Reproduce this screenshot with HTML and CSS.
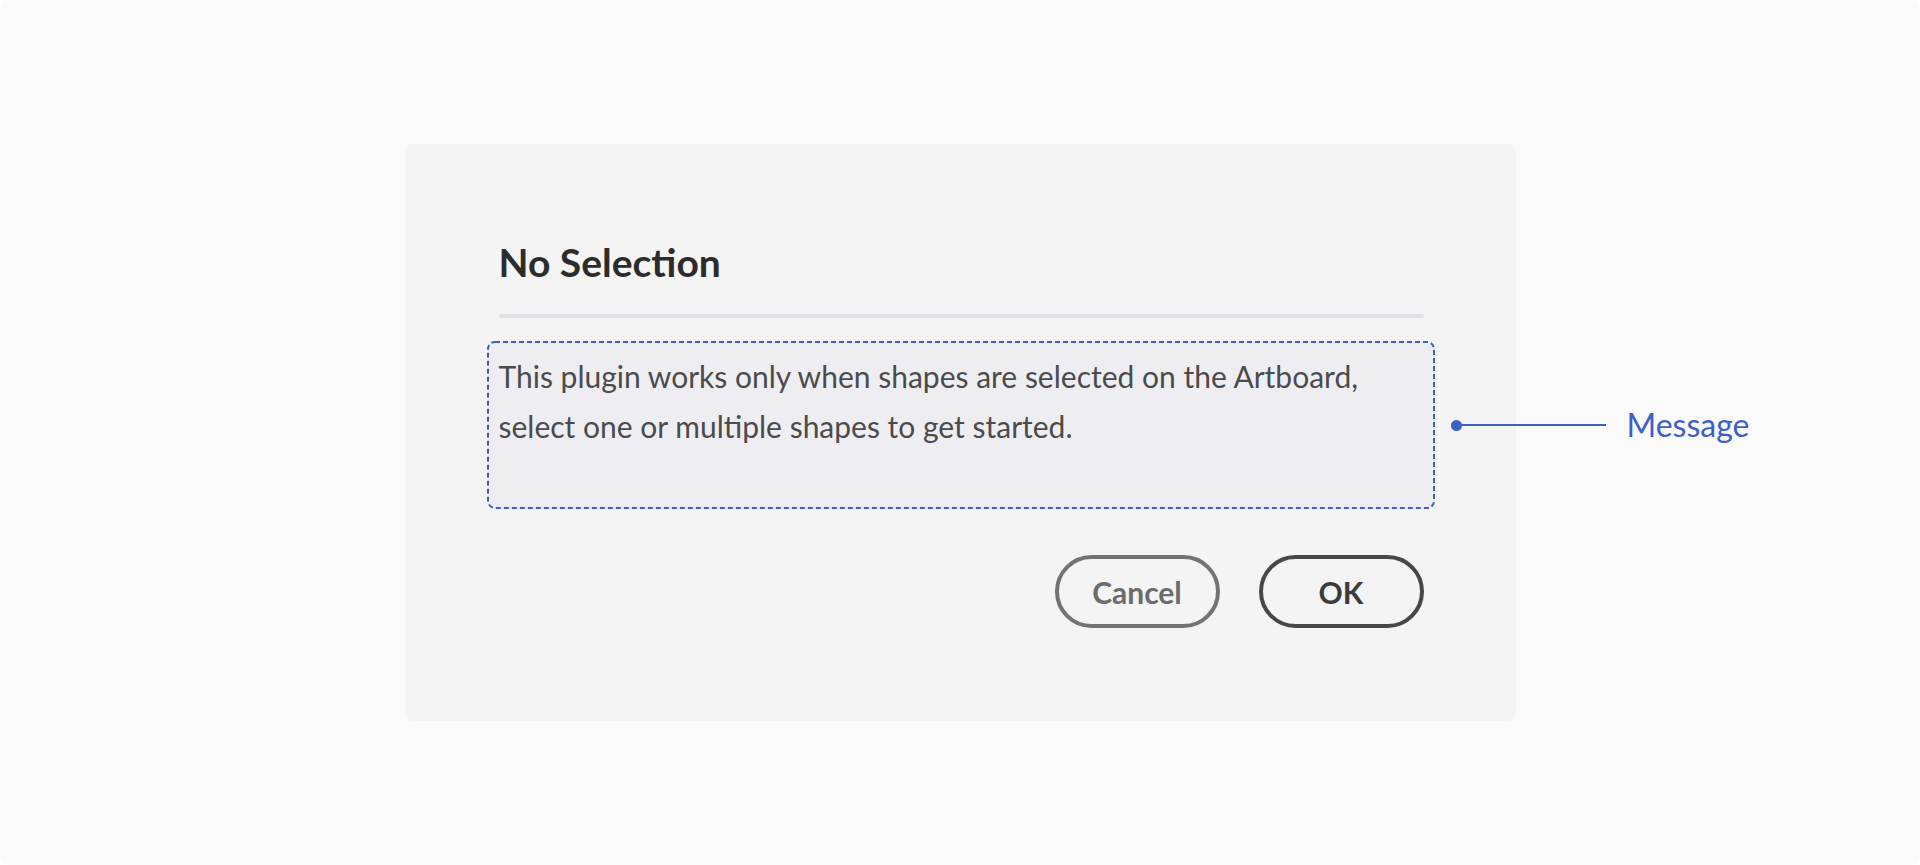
FILE: index.html
```html
<!DOCTYPE html>
<html lang="en">
<head>
<meta charset="utf-8">
<title>No Selection dialog</title>
<link rel="stylesheet" href="styles.css">
</head>
<body>
<div class="frame">
  <div class="dialog">
    <h1 class="title">No Selection</h1>
    <div class="divider"></div>
    <div class="message">
      <svg class="dash" width="100%" height="100%" preserveAspectRatio="none">
        <rect x="1" y="1" width="946" height="166" rx="7" ry="7" fill="none" stroke="#3d5fc6" stroke-width="2" stroke-dasharray="5 3"/>
      </svg>
      <p class="message-text">This plugin works only when shapes are selected on the Artboard,<br>select one or multiple shapes to get started.</p>
    </div>
    <div class="actions">
      <button class="btn btn-secondary">Cancel</button>
      <button class="btn btn-primary">OK</button>
    </div>
    <div class="callout">
      <span class="callout-dot"></span>
      <span class="callout-line"></span>
      <span class="callout-label">Message</span>
    </div>
  </div>
</div>
</body>
</html>
```
FILE: styles.css
```css
html, body {
  margin: 0;
  padding: 0;
  background: #ffffff;
  overflow: hidden;
}
body {
  font-family: Lato, "Noto Sans", sans-serif;
}
.frame {
  width: 1920px;
  height: 865px;
  box-sizing: border-box;
  background: #fafafa;
  border-radius: 10px;
  display: flex;
  align-items: center;
  justify-content: center;
}
.dialog {
  position: relative;
  width: 1111px;
  height: 577px;
  box-sizing: border-box;
  background: #f4f4f4;
  border-radius: 8px;
  padding: 96px 92px 0 94px;
  display: flex;
  flex-direction: column;
}
.title {
  margin: 0;
  font-size: 39px;
  line-height: 44px;
  font-weight: 700;
  color: #2c2c2c;
}
.divider {
  margin-top: 30px;
  height: 4px;
  background: #e1e1e7;
  border-radius: 2px;
}
.message {
  position: relative;
  margin: 23px -11px 0 -12px;
  height: 168px;
  box-sizing: border-box;
  padding: 10px 12px 0;
  background: #eeeef2;
  border-radius: 8px;
}
.dash {
  position: absolute;
  inset: 0;
}
.message-text {
  margin: 0;
  font-size: 30px;
  line-height: 50px;
  color: #4b4b4b;
}
.actions {
  margin-top: 46px;
  display: flex;
  justify-content: flex-end;
  gap: 39px;
}
.btn {
  width: 165px;
  height: 73px;
  box-sizing: border-box;
  border-radius: 37px;
  background: transparent;
  border: 4px solid;
  font-family: Lato, "Noto Sans", sans-serif;
  font-weight: 700;
  font-size: 30px;
  padding: 0;
}
.btn-secondary {
  border-color: #737373;
  color: #6c6c6c;
}
.btn-primary {
  border-color: #474747;
  color: #3c3c3c;
}
.callout {
  position: absolute;
  left: 1046px;
  top: 261px;
  display: flex;
  align-items: center;
}
.callout-dot {
  width: 11px;
  height: 11px;
  border-radius: 50%;
  background: #3d5fc6;
}
.callout-line {
  width: 146px;
  height: 2px;
  background: #3d5fc6;
  margin-left: -2px;
}
.callout-label {
  margin-left: 21px;
  font-size: 32px;
  line-height: 40px;
  color: #3d5fc6;
}
```
